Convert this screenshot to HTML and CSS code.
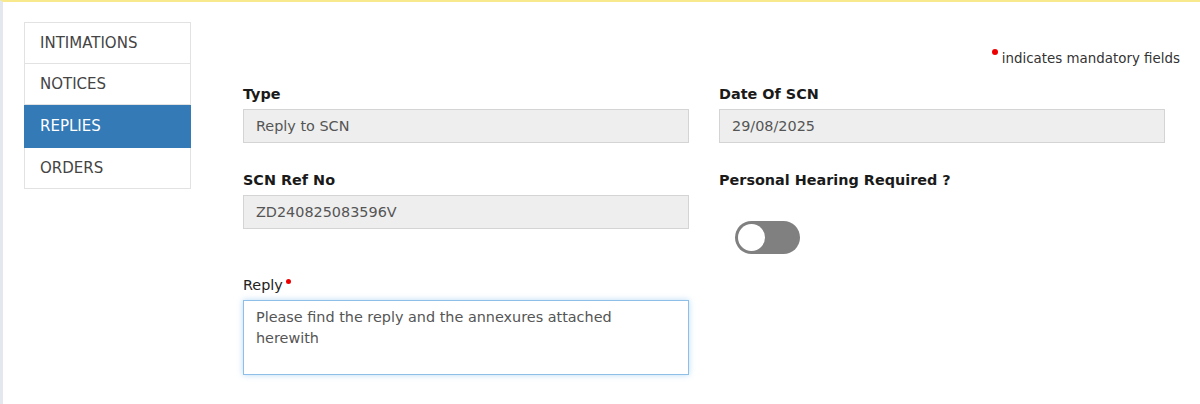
FILE: index.html
```html
<!DOCTYPE html>
<html>
<head>
<meta charset="utf-8">
<link rel="stylesheet" href="styles.css">
</head>
<body>
<div class="page">
  <nav class="sidebar">
    <a class="nav-item">INTIMATIONS</a>
    <a class="nav-item">NOTICES</a>
    <a class="nav-item active">REPLIES</a>
    <a class="nav-item">ORDERS</a>
  </nav>
  <main class="main">
    <div class="note"><span class="req-dot"></span> indicates mandatory fields</div>
    <div class="grid">
      <div class="field">
        <label class="label">Type</label>
        <div class="input">Reply to SCN</div>
      </div>
      <div class="field">
        <label class="label">Date Of SCN</label>
        <div class="input">29/08/2025</div>
      </div>
      <div class="field">
        <label class="label">SCN Ref No</label>
        <div class="input">ZD240825083596V</div>
      </div>
      <div class="field">
        <label class="label">Personal Hearing Required ?</label>
        <div class="toggle"><span class="knob"></span></div>
      </div>
      <div class="field reply">
        <label class="label plain">Reply<span class="req-dot small"></span></label>
        <div class="textarea">Please find the reply and the annexures attached herewith</div>
      </div>
    </div>
  </main>
</div>
</body>
</html>
```
FILE: styles.css
```css
* { box-sizing: border-box; }
html, body { margin: 0; padding: 0; background: #fff; }
body {
  font-family: "DejaVu Sans", Verdana, sans-serif;
  font-size: 14.4px;
  color: #333;
}
.page {
  width: 1200px;
  height: 404px;
  border-top: 2px solid #f8e98c;
  border-left: 3px solid #e3e8ee;
  display: flex;
  align-items: flex-start;
  padding: 20px 0 0 21px;
  overflow: hidden;
}
.sidebar {
  width: 167px;
  border: 1px solid #e2e2e2;
  display: flex;
  flex-direction: column;
  flex-shrink: 0;
}
.nav-item {
  display: block;
  height: 41px;
  line-height: 40px;
  padding: 0 15px;
  color: #444;
  font-size: 15px;
  border-bottom: 1px solid #e2e2e2;
}
.nav-item:last-child { border-bottom: none; height: 40px; }
.nav-item.active {
  background: #337ab7;
  color: #fff;
  border-bottom-color: #337ab7;
  margin: 0 -1px;
  padding: 0 16px;
  height: 43px;
  line-height: 43px;
}
.main {
  margin-left: 37px;
  width: 952px;
  padding-top: 27px;
}
.note {
  text-align: right;
  line-height: 18px;
  font-size: 13.4px;
  color: #333;
}
.req-dot {
  display: inline-block;
  width: 6px;
  height: 6px;
  border-radius: 50%;
  background: #e00;
  vertical-align: 8px;
}
.req-dot.small {
  width: 5px;
  height: 5px;
  margin-left: 3px;
  vertical-align: 6px;
}
.grid {
  display: grid;
  grid-template-columns: 1fr 1fr;
  column-gap: 30px;
  row-gap: 28px;
  margin-top: 17px;
  padding: 0 15px;
}
.field { display: flex; flex-direction: column; align-items: flex-start; }
.label {
  font-weight: bold;
  color: #1a1a1a;
  line-height: 18px;
  margin-bottom: 6px;
}
.label.plain { font-weight: normal; color: #222; }
.input {
  width: 100%;
  height: 34px;
  background: #eee;
  border: 1px solid #d4d4d4;
  padding: 0 12px;
  line-height: 32px;
  color: #555;
}
.toggle {
  margin: 26px 0 -25px 16px;
  width: 65px;
  height: 33px;
  border-radius: 17px;
  background: #808080;
  padding: 3px;
}
.knob {
  display: block;
  width: 27px;
  height: 27px;
  border-radius: 50%;
  background: #fff;
}
.reply { margin-top: 19px; }
.textarea {
  width: 100%;
  height: 75px;
  border: 1px solid #8dbfe8;
  box-shadow: 0 0 6px rgba(102, 175, 233, 0.45);
  padding: 6px 12px;
  line-height: 21px;
  color: #555;
}
```
